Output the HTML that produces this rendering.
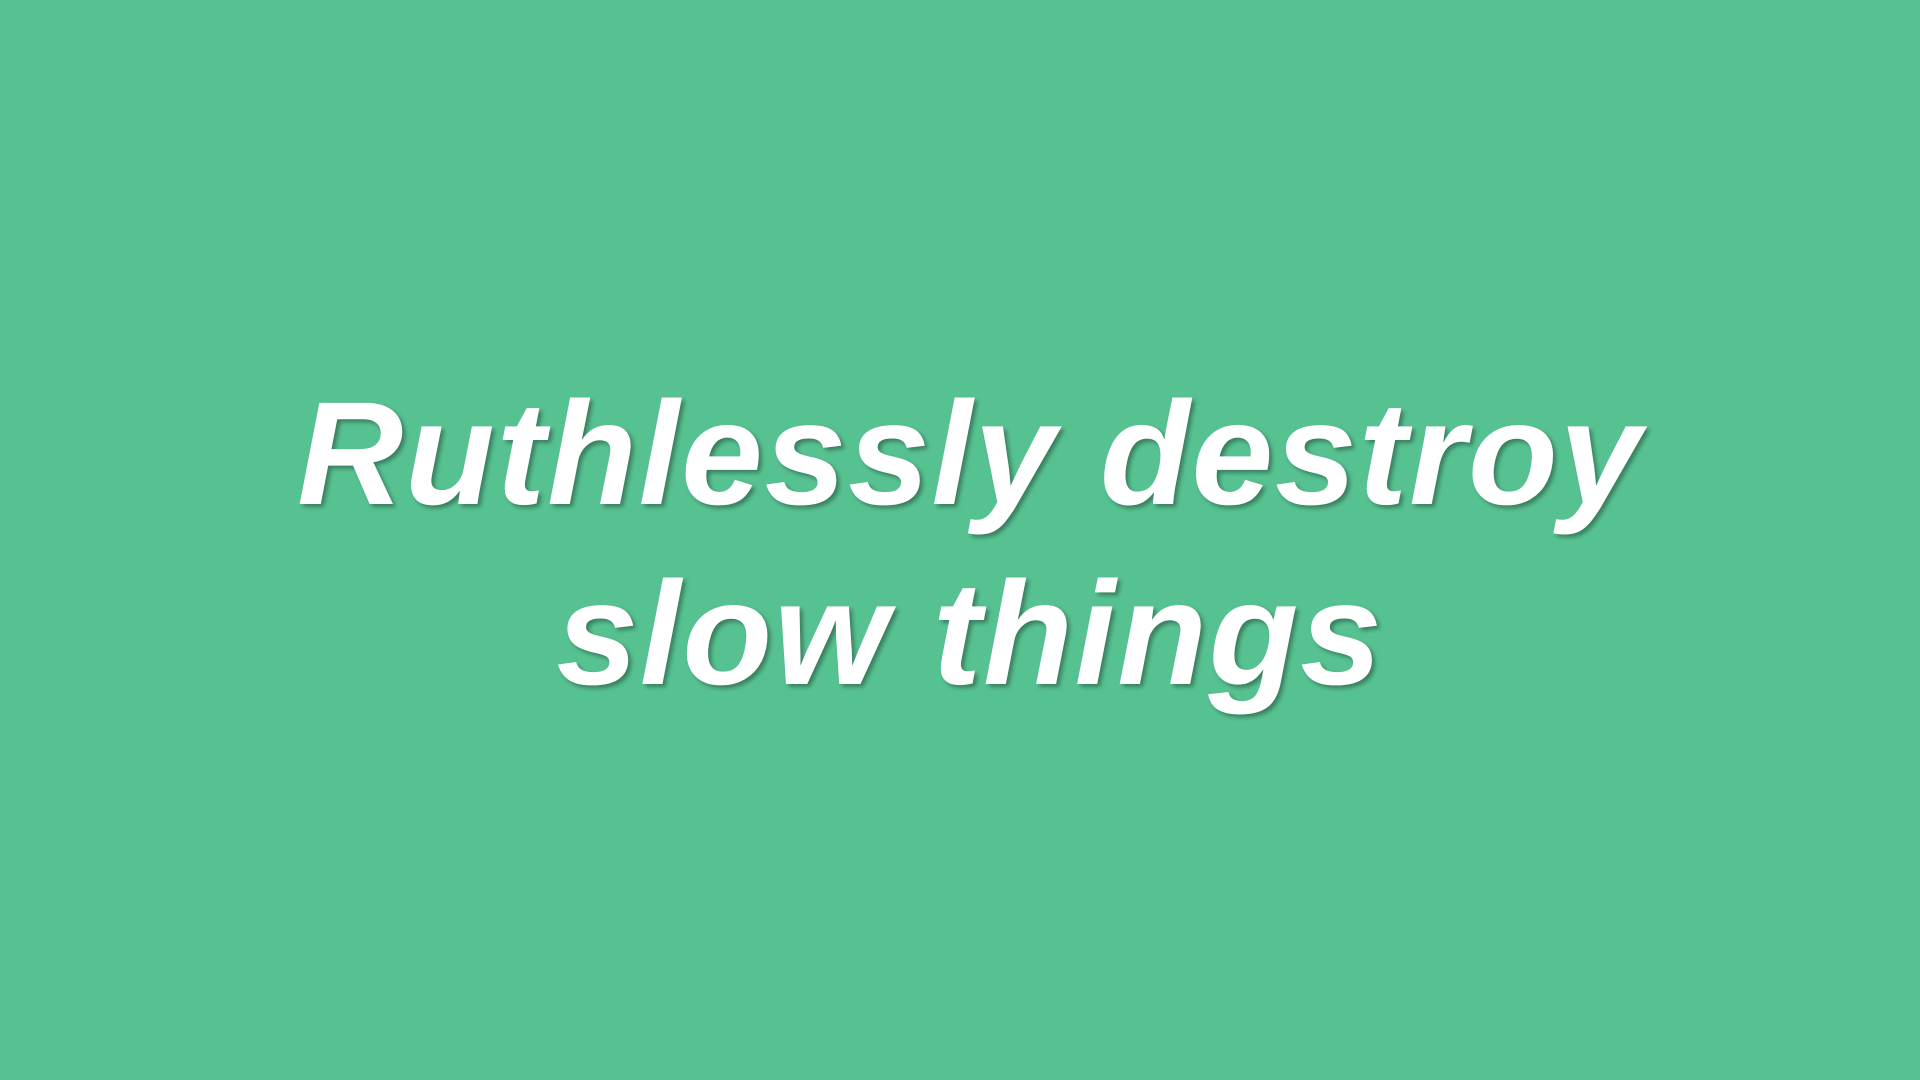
<!DOCTYPE html>
<html><head><meta charset="utf-8"><style>
html,body{margin:0;padding:0;width:1920px;height:1080px;overflow:hidden;background:#57C291;}
.l{position:absolute;left:10px;width:1920px;text-align:center;font-family:"Liberation Sans",Arial,sans-serif;font-weight:bold;font-style:italic;font-size:147px;line-height:147px;color:#fff;letter-spacing:1.7px;text-shadow:3px 3px 4px rgba(0,0,0,0.35);white-space:nowrap;}
</style></head><body>
<div class="l" style="top:381px">Ruthlessly destroy</div>
<div class="l" style="top:561px">slow things</div>
</body></html>
